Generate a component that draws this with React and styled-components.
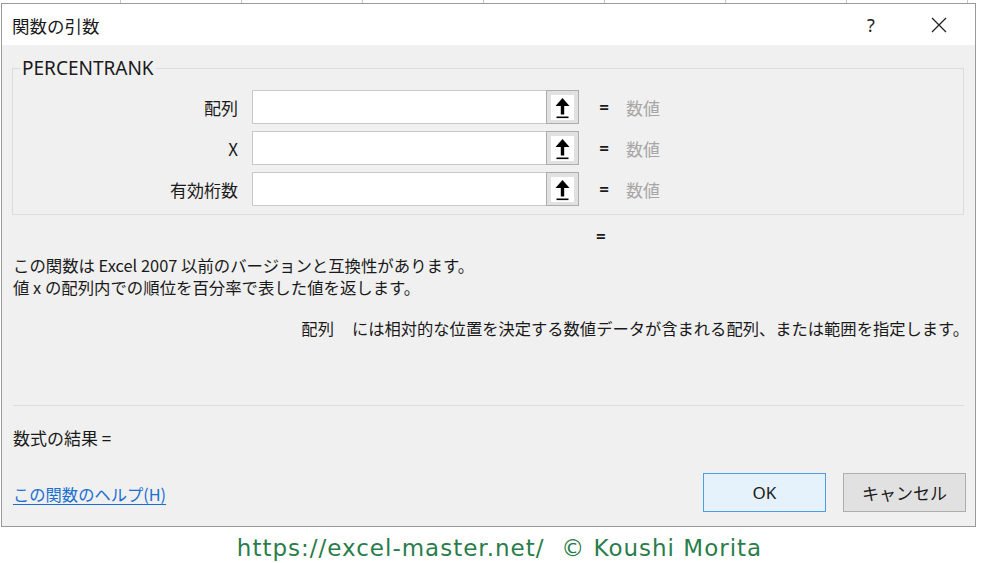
import React from "react";
import styled, { createGlobalStyle } from "styled-components";

const Global = createGlobalStyle`
  html, body { margin: 0; padding: 0; background: #ffffff; }
  body { font-family: "Noto Sans CJK JP", "Noto Sans", sans-serif; color: #1a1a1a; }
  * { box-sizing: border-box; }
`;

const Page = styled.div`
  width: 1000px;
  height: 563px;
  display: flex;
  flex-direction: column;
  overflow: hidden;
`;

const TopStrip = styled.div`
  height: 3px;
  background: repeating-linear-gradient(90deg, #ffffff 0 120px, #c8c8c8 120px 121px);
`;

const Dialog = styled.div`
  width: 975px;
  margin-left: 1px;
  border: 1px solid #9a9a9a;
  background: #f0f0f0;
  display: flex;
  flex-direction: column;
`;

const TitleBar = styled.div`
  height: 41px;
  background: #ffffff;
  display: flex;
  align-items: center;
  padding-left: 10px;
`;

const Title = styled.div`
  font-size: 17.5px;
  flex: 1;
  padding-top: 1px;
`;

const TitleButton = styled.div`
  width: 46px;
  height: 41px;
  display: flex;
  align-items: center;
  justify-content: center;
  font-family: "Noto Sans", sans-serif;
  font-size: 18px;
  color: #222;
  margin-right: ${(p) => p.$mr || 0}px;
`;

const Body = styled.div`
  display: flex;
  flex-direction: column;
  padding: 0 11px 14px 10px;
  font-size: 16px;
`;

const Group = styled.fieldset`
  margin: 12px 0 0 0;
  padding: 11px 0 8px 0;
  border: 1px solid #dcdcdc;
  display: flex;
  flex-direction: column;
  gap: 7px;
  min-width: 0;
`;

const Legend = styled.legend`
  padding: 0 2px;
  margin-left: 7px;
  font-family: "Noto Sans", sans-serif;
  font-size: 19px;
  line-height: 22px;
`;

const Row = styled.div`
  display: grid;
  grid-template-columns: 239px 294px 33px 30px auto;
  align-items: center;
  height: 34px;
`;

const Label = styled.div`
  text-align: right;
  padding-right: 14px;
  font-size: 17px;
`;

const Field = styled.div`
  height: 100%;
  background: #ffffff;
  border: 1px solid #c9c9c9;
  border-right: none;
`;

const PickButton = styled.div`
  height: 100%;
  background: #e1e1e1;
  border: 1px solid #adadad;
  display: flex;
  align-items: center;
  justify-content: center;
`;

const PickInner = styled.div`
  width: 23px;
  height: 25px;
  background: #ffffff;
  display: flex;
  align-items: center;
  justify-content: center;
`;

const Eq = styled.div`
  font-family: "Noto Sans", sans-serif;
  font-size: 17px;
  text-align: right;
  font-weight: 600;
`;

const Value = styled.div`
  color: #a6a6a6;
  padding-left: 17px;
  font-size: 17px;
`;

const LoneEq = styled.div`
  margin-top: 12px;
  padding-left: 584px;
  line-height: 20px;
  font-family: "Noto Sans", sans-serif;
  font-size: 17px;
  font-weight: 600;
`;

const Description = styled.div`
  margin-top: 7px;
  padding-left: 1px;
  line-height: 22px;
  font-size: 16.4px;
`;

const ArgDescription = styled.div`
  margin-top: 20px;
  margin-right: -5px;
  text-align: right;
  line-height: 20px;
  font-size: 16.3px;
`;

const ArgName = styled.span`
  margin-right: 18px;
`;

const Separator = styled.div`
  margin-top: 67px;
  height: 1px;
  background: #dcdcdc;
  margin-left: 1px;
`;

const Result = styled.div`
  margin-top: 22px;
  padding-left: 1px;
  line-height: 20px;
  font-size: 17px;
`;

const Footer = styled.div`
  margin-top: 25px;
  margin-right: -2px;
  display: flex;
  align-items: center;
  gap: 17px;
`;

const HelpLink = styled.a`
  flex: 1;
  color: #1a6fd1;
  text-decoration: underline;
  text-underline-offset: 3px;
  font-size: 16.3px;
  padding-left: 1px;
  margin-top: 3px;
  cursor: pointer;
`;

const Button = styled.div`
  width: 123px;
  height: 39px;
  display: flex;
  align-items: center;
  justify-content: center;
  font-size: 17px;
  background: ${(p) => (p.$primary ? "#e5f1fb" : "#e1e1e1")};
  border: 1px solid ${(p) => (p.$primary ? "#4b9ee6" : "#adadad")};
  font-family: ${(p) => (p.$primary ? '"Noto Sans", sans-serif' : "inherit")};
`;

const Credit = styled.div`
  margin-top: 6px;
  text-align: center;
  font-family: "DejaVu Sans", Verdana, sans-serif;
  font-size: 23px;
  letter-spacing: 1px;
  color: #2a7d4b;
  line-height: 30px;
  padding-right: 1px;
`;

const UpArrow = () => (
  <svg width="23" height="25" viewBox="0 0 23 25">
    <polygon points="11.5,3 4.5,11 18.5,11" fill="#000" />
    <rect x="9.8" y="10" width="3.4" height="9.5" fill="#000" />
    <rect x="5.5" y="21.5" width="12" height="1.6" fill="#000" />
  </svg>
);

const CloseIcon = () => (
  <svg width="16" height="16" viewBox="0 0 16 16">
    <path d="M1 1 L15 15 M15 1 L1 15" stroke="#222" strokeWidth="1.3" fill="none" />
  </svg>
);

const args = ["配列", "X", "有効桁数"];

export default function App() {
  return (
    <>
      <Global />
      <Page>
        <TopStrip />
        <Dialog>
          <TitleBar>
            <Title>関数の引数</Title>
            <TitleButton $mr={22}>?</TitleButton>
            <TitleButton $mr={13}>
              <CloseIcon />
            </TitleButton>
          </TitleBar>
          <Body>
            <Group>
              <Legend>PERCENTRANK</Legend>
              {args.map((label) => (
                <Row key={label}>
                  <Label>{label}</Label>
                  <Field />
                  <PickButton>
                    <PickInner>
                      <UpArrow />
                    </PickInner>
                  </PickButton>
                  <Eq>=</Eq>
                  <Value>数値</Value>
                </Row>
              ))}
            </Group>
            <LoneEq>=</LoneEq>
            <Description>
              この関数は Excel 2007 以前のバージョンと互換性があります。
              <br />
              値 x の配列内での順位を百分率で表した値を返します。
            </Description>
            <ArgDescription>
              <ArgName>配列</ArgName>
              には相対的な位置を決定する数値データが含まれる配列、または範囲を指定します。
            </ArgDescription>
            <Separator />
            <Result>数式の結果 =</Result>
            <Footer>
              <HelpLink>この関数のヘルプ(H)</HelpLink>
              <Button $primary>OK</Button>
              <Button>キャンセル</Button>
            </Footer>
          </Body>
        </Dialog>
        <Credit>https://excel-master.net/&nbsp;&nbsp;© Koushi Morita</Credit>
      </Page>
    </>
  );
}
